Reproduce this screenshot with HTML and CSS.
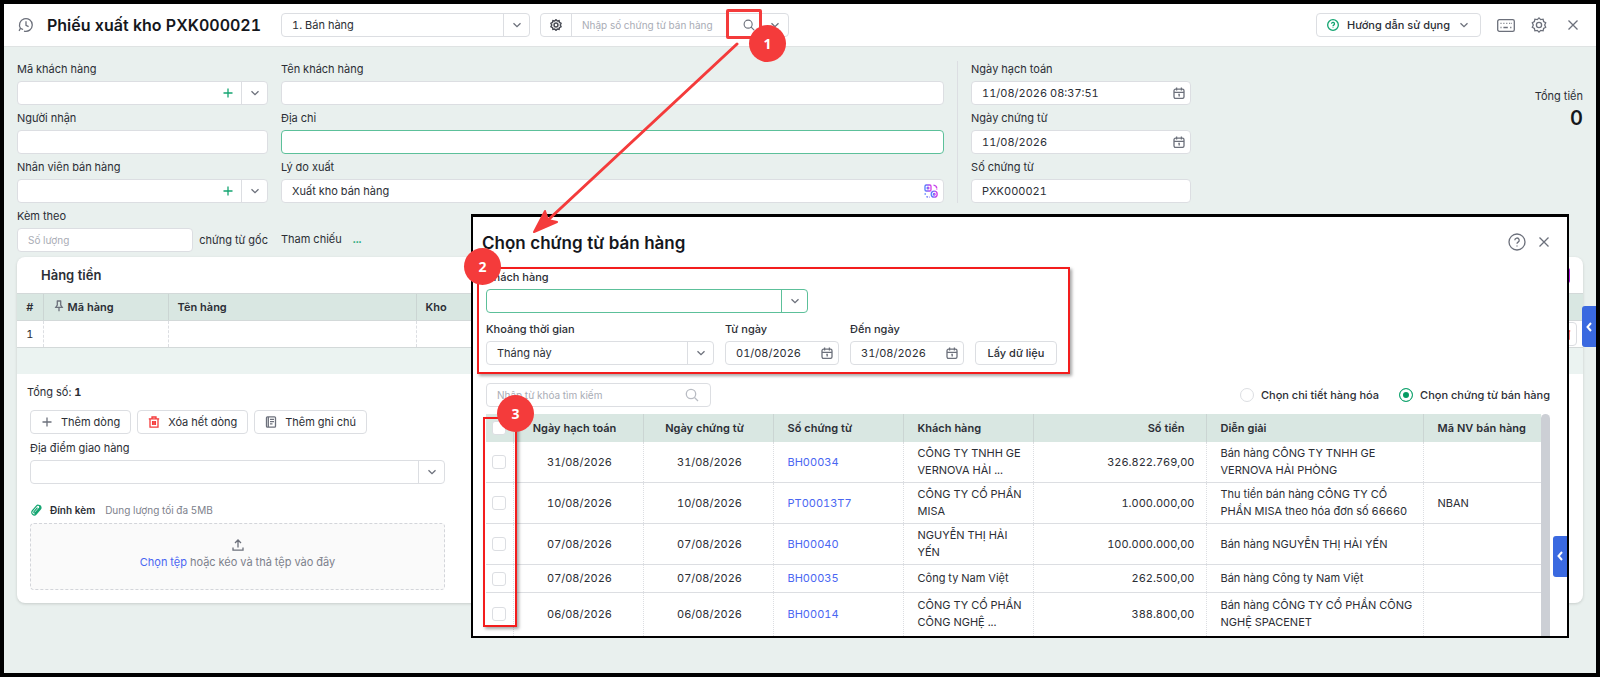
FILE: index.html
```html
<!DOCTYPE html>
<html lang="vi">
<head>
    <meta charset="UTF-8">
    <meta name="viewport" content="width=device-width, initial-scale=1.0">
    <title>Phiếu xuất kho PXK000021</title>
    <link rel="stylesheet" href="styles.css">
</head>
<body>
    <svg class="icon-defs" xmlns="http://www.w3.org/2000/svg">
        <symbol id="i-down" viewBox="0 0 12 12"><path d="M2.5 4.2 6 7.7l3.5-3.5"/></symbol>
        <symbol id="i-left" viewBox="0 0 12 12"><path d="M8 2 4.5 6 8 10"/></symbol>
        <symbol id="i-plus" viewBox="0 0 12 12"><path d="M6 1.5v9M1.5 6h9"/></symbol>
        <symbol id="i-close" viewBox="0 0 12 12"><path d="M1.5 1.5l9 9M10.5 1.5l-9 9"/></symbol>
        <symbol id="i-search" viewBox="0 0 14 14"><circle cx="6" cy="6" r="4.7"/><path d="M9.5 9.5 13 13"/></symbol>
        <symbol id="i-history" viewBox="0 0 16 16"><path d="M2.6 11.6A6.4 6.4 0 1 1 6 14.1M1.1 13.9l1.3-2.6 2.7 1.2M8 4.3V8.4l2.6 1.2"/></symbol>
        <symbol id="i-gear" viewBox="0 0 16 16"><circle cx="8" cy="8" r="2.6"/><path d="M8 .9l1.7 1.7 2.4-.4.5 2.3 2.1 1.3L13.7 8l1 2.2-2.1 1.3-.5 2.3-2.4-.4L8 15.1l-1.7-1.7-2.4.4-.5-2.3-2.1-1.3 1-2.2-1-2.2 2.1-1.3.5-2.3 2.4.4z"/></symbol>
        <symbol id="i-help" viewBox="0 0 18 18"><circle cx="9" cy="9" r="8"/><path d="M6.8 7.2a2.2 2.2 0 1 1 3.3 1.9c-.8.5-1.1.8-1.1 1.6M9 12.6v.9"/></symbol>
        <symbol id="i-keyboard" viewBox="0 0 18 13"><rect x=".7" y=".7" width="16.6" height="11.6" rx="1.6"/><path d="M3.5 4.3h1M6.4 4.3h1M9.3 4.3h1M12.2 4.3h1M14.3 4.3h.6M3.5 8.5h1M6.4 8.5h4.4M13.2 8.5h1.2"/></symbol>
        <symbol id="i-calendar" viewBox="0 0 12 12"><rect x="1" y="2.2" width="10" height="9.2" rx="1.6"/><path d="M1 5.3h10M3.6.6v3M8.4.6v3M5.3 7.5h.9v2"/></symbol>
        <symbol id="i-pin" viewBox="0 0 10 12"><path d="M2.8 1h4.4M3.3 1v4L1.8 7.3h6.4L6.7 5V1M5 7.3v4"/></symbol>
        <symbol id="i-trash" viewBox="0 0 12 12"><path d="M.8 2.8h10.4M4 2.8V1h4v1.8M2 2.8v8.4h8V2.8M4.6 5v4M6 5v4M7.4 5v4"/></symbol>
        <symbol id="i-note" viewBox="0 0 12 12"><rect x="1.5" y=".8" width="9" height="10.4" rx="1"/><path d="M3.3 1v10M5 3.4h4M5 5.6h4M5 7.8h2.5"/></symbol>
        <symbol id="i-clip" viewBox="0 0 12 13"><path d="M10.8 5.6 6.2 10.9a2.7 2.7 0 0 1-4.1-3.6L6.6 2a1.9 1.9 0 0 1 3 2.5L5.3 9.4a.9.9 0 0 1-1.4-1.2l3.7-4.3M10.8 5.6A2.6 2.6 0 0 0 9.6 1.5M4.7 11.8 11 4.4"/></symbol>
        <symbol id="i-upload" viewBox="0 0 12 12"><path d="M6 8.5V1.2M3 4l3-3 3 3M1 8.6v2.6h10V8.6"/></symbol>
        <symbol id="i-ai" viewBox="0 0 14 14"><rect x="1" y="1" width="6" height="6" rx="1.2"/><circle cx="4" cy="4" r=".9"/><circle cx="10.2" cy="10.2" r="3"/><circle cx="10.2" cy="10.2" r=".9"/><path d="M9.5 1.2c2 .2 3.2 1.3 3.3 3.3M1.2 9.3v1.4M2.4 12.6l1.6.5M5.2 13.1h.6M12.8 5.4v.5"/></symbol>
        <linearGradient id="aiColor" x1="0" x2="1"><stop offset="0" stop-color="#4d7cfe"/><stop offset="1" stop-color="#d63be8"/></linearGradient>
    </svg>

    <header class="topbar">
        <svg class="icon icon-history"><use href="#i-history"/></svg>
        <h1>Phiếu xuất kho PXK000021</h1>
        <div class="box combo type-select">
            <select aria-label="Loại phiếu"><option>1. Bán hàng</option></select>
            <span class="arrow"><svg class="icon"><use href="#i-down"/></svg></span>
        </div>
        <div class="box combo voucher-search">
            <button class="setting" aria-label="Thiết lập"><svg class="icon"><use href="#i-gear"/></svg></button>
            <input type="text" placeholder="Nhập số chứng từ bán hàng" aria-label="Số chứng từ bán hàng">
            <button class="find" aria-label="Tìm"><svg class="icon"><use href="#i-search"/></svg></button>
            <button class="arrow plain" aria-label="Mở danh sách"><svg class="icon"><use href="#i-down"/></svg></button>
            <span class="mark mark-find"></span>
            <span class="step step-1">1</span>
        </div>
        <div class="topbar-right">
            <button class="box btn guide"><svg class="icon green"><use href="#i-help"/></svg>Hướng dẫn sử dụng<svg class="icon"><use href="#i-down"/></svg></button>
            <button class="icon-btn" aria-label="Phím tắt"><svg class="icon icon-keyboard"><use href="#i-keyboard"/></svg></button>
            <button class="icon-btn" aria-label="Cài đặt"><svg class="icon icon-gear"><use href="#i-gear"/></svg></button>
            <button class="icon-btn" aria-label="Đóng"><svg class="icon icon-close"><use href="#i-close"/></svg></button>
        </div>
    </header>

    <main>
        <form class="voucher">
            <div class="column">
                <div class="field">
                    <label for="customerCode">Mã khách hàng</label>
                    <div class="box combo">
                        <input type="text" id="customerCode">
                        <button type="button" class="add" aria-label="Thêm khách hàng"><svg class="icon"><use href="#i-plus"/></svg></button>
                        <button type="button" class="arrow" aria-label="Mở danh sách"><svg class="icon"><use href="#i-down"/></svg></button>
                    </div>
                </div>
                <div class="field">
                    <label for="receiver">Người nhận</label>
                    <input type="text" class="box" id="receiver">
                </div>
                <div class="field">
                    <label for="seller">Nhân viên bán hàng</label>
                    <div class="box combo">
                        <input type="text" id="seller">
                        <button type="button" class="add" aria-label="Thêm nhân viên"><svg class="icon"><use href="#i-plus"/></svg></button>
                        <button type="button" class="arrow" aria-label="Mở danh sách"><svg class="icon"><use href="#i-down"/></svg></button>
                    </div>
                </div>
                <div class="field">
                    <label for="attached">Kèm theo</label>
                    <div class="attached">
                        <input type="text" class="box" id="attached" placeholder="Số lượng">
                        <span>chứng từ gốc</span>
                    </div>
                </div>
            </div>
            <div class="column">
                <div class="field">
                    <label for="customerName">Tên khách hàng</label>
                    <input type="text" class="box" id="customerName">
                </div>
                <div class="field">
                    <label for="address">Địa chỉ</label>
                    <input type="text" class="box focused" id="address">
                </div>
                <div class="field">
                    <label for="reason">Lý do xuất</label>
                    <div class="box combo">
                        <input type="text" id="reason" value="Xuất kho bán hàng">
                        <button type="button" class="ai" aria-label="Gợi ý"><svg class="icon"><use href="#i-ai"/></svg></button>
                    </div>
                </div>
                <div class="reference">Tham chiếu <a href="#">...</a></div>
            </div>
            <div class="column dates">
                <div class="field">
                    <label for="postDate">Ngày hạch toán</label>
                    <div class="box combo">
                        <input type="text" id="postDate" value="11/08/2026 08:37:51">
                        <button type="button" class="calendar" aria-label="Chọn ngày"><svg class="icon"><use href="#i-calendar"/></svg></button>
                    </div>
                </div>
                <div class="field">
                    <label for="voucherDate">Ngày chứng từ</label>
                    <div class="box combo">
                        <input type="text" id="voucherDate" value="11/08/2026">
                        <button type="button" class="calendar" aria-label="Chọn ngày"><svg class="icon"><use href="#i-calendar"/></svg></button>
                    </div>
                </div>
                <div class="field">
                    <label for="voucherNo">Số chứng từ</label>
                    <input type="text" class="box" id="voucherNo" value="PXK000021">
                </div>
            </div>
            <div class="total">
                <span>Tổng tiền</span>
                <strong>0</strong>
            </div>
        </form>

        <section class="card">
            <div class="card-head">
                <h2>Hàng tiền</h2>
                <span class="ai-tag"></span>
            </div>
            <table class="items">
                <thead>
                    <tr>
                        <th class="c-no">#</th>
                        <th class="c-code"><svg class="icon"><use href="#i-pin"/></svg>Mã hàng</th>
                        <th class="c-name">Tên hàng</th>
                        <th>Kho</th>
                    </tr>
                </thead>
                <tbody>
                    <tr>
                        <td class="c-no">1</td>
                        <td></td>
                        <td></td>
                        <td class="c-action"><button class="box row-delete" aria-label="Xóa dòng"><svg class="icon"><use href="#i-trash"/></svg></button></td>
                    </tr>
                </tbody>
            </table>
            <div class="items-sum"></div>
            <div class="card-body">
                <p class="count">Tổng số: <b>1</b></p>
                <div class="details">
                    <div class="actions">
                        <button class="box btn"><svg class="icon"><use href="#i-plus"/></svg>Thêm dòng</button>
                        <button class="box btn"><svg class="icon red"><use href="#i-trash"/></svg>Xóa hết dòng</button>
                        <button class="box btn"><svg class="icon"><use href="#i-note"/></svg>Thêm ghi chú</button>
                    </div>
                    <div class="field">
                        <label for="place">Địa điểm giao hàng</label>
                        <div class="box combo">
                            <input type="text" id="place">
                            <button class="arrow" aria-label="Mở danh sách"><svg class="icon"><use href="#i-down"/></svg></button>
                        </div>
                    </div>
                    <div class="attach-title">
                        <svg class="icon green"><use href="#i-clip"/></svg>
                        <b>Đính kèm</b>
                        <span>Dung lượng tối đa 5MB</span>
                    </div>
                    <div class="dropzone">
                        <svg class="icon"><use href="#i-upload"/></svg>
                        <p><a href="#">Chọn tệp</a> hoặc kéo và thả tệp vào đây</p>
                    </div>
                </div>
            </div>
        </section>
    </main>

    <button class="side-tab page-tab" aria-label="Mở rộng"><svg class="icon"><use href="#i-left"/></svg></button>

    <section class="dialog" role="dialog" aria-labelledby="dialogTitle">
        <div class="dialog-head">
            <h2 id="dialogTitle">Chọn chứng từ bán hàng</h2>
            <button class="icon-btn" aria-label="Trợ giúp"><svg class="icon icon-help"><use href="#i-help"/></svg></button>
            <button class="icon-btn" aria-label="Đóng"><svg class="icon icon-close"><use href="#i-close"/></svg></button>
        </div>

        <div class="filter">
            <div class="field customer">
                <label for="customer">Khách hàng</label>
                <div class="box combo focused">
                    <input type="text" id="customer">
                    <button class="arrow" aria-label="Mở danh sách"><svg class="icon"><use href="#i-down"/></svg></button>
                </div>
            </div>
            <div class="filter-row">
                <div class="field period">
                    <label for="period">Khoảng thời gian</label>
                    <div class="box combo">
                        <select id="period"><option>Tháng này</option></select>
                        <span class="arrow"><svg class="icon"><use href="#i-down"/></svg></span>
                    </div>
                </div>
                <div class="field date">
                    <label for="fromDate">Từ ngày</label>
                    <div class="box combo">
                        <input type="text" id="fromDate" value="01/08/2026">
                        <button class="calendar" aria-label="Chọn ngày"><svg class="icon"><use href="#i-calendar"/></svg></button>
                    </div>
                </div>
                <div class="field date">
                    <label for="toDate">Đến ngày</label>
                    <div class="box combo">
                        <input type="text" id="toDate" value="31/08/2026">
                        <button class="calendar" aria-label="Chọn ngày"><svg class="icon"><use href="#i-calendar"/></svg></button>
                    </div>
                </div>
                <button class="box btn load">Lấy dữ liệu</button>
            </div>
            <span class="mark mark-filter"></span>
            <span class="step step-2">2</span>
        </div>

        <div class="toolbar">
            <div class="box combo keyword">
                <input type="text" placeholder="Nhập từ khóa tìm kiếm" aria-label="Từ khóa">
                <button class="find" aria-label="Tìm"><svg class="icon"><use href="#i-search"/></svg></button>
            </div>
            <label class="radio"><input type="radio" name="mode">Chọn chi tiết hàng hóa</label>
            <label class="radio"><input type="radio" name="mode" checked>Chọn chứng từ bán hàng</label>
        </div>

        <div class="list">
            <table class="vouchers">
                <thead>
                    <tr>
                        <th class="v-check"><input type="checkbox" aria-label="Chọn tất cả"></th>
                        <th class="v-date">Ngày hạch toán</th>
                        <th class="v-date">Ngày chứng từ</th>
                        <th class="v-no">Số chứng từ</th>
                        <th class="v-customer">Khách hàng</th>
                        <th class="v-money">Số tiền</th>
                        <th>Diễn giải</th>
                        <th class="v-seller">Mã NV bán hàng</th>
                    </tr>
                </thead>
                <tbody>
                    <tr>
                        <td class="v-check"><input type="checkbox" aria-label="BH00034"></td>
                        <td class="v-date">31/08/2026</td>
                        <td class="v-date">31/08/2026</td>
                        <td><a href="#">BH00034</a></td>
                        <td>CÔNG TY TNHH GE VERNOVA HẢI ...</td>
                        <td class="v-money">326.822.769,00</td>
                        <td>Bán hàng CÔNG TY TNHH GE VERNOVA HẢI PHÒNG</td>
                        <td></td>
                    </tr>
                    <tr>
                        <td class="v-check"><input type="checkbox" aria-label="PT00013T7"></td>
                        <td class="v-date">10/08/2026</td>
                        <td class="v-date">10/08/2026</td>
                        <td><a href="#">PT00013T7</a></td>
                        <td>CÔNG TY CỔ PHẦN MISA</td>
                        <td class="v-money">1.000.000,00</td>
                        <td>Thu tiền bán hàng CÔNG TY CỔ PHẦN MISA theo hóa đơn số 66660</td>
                        <td>NBAN</td>
                    </tr>
                    <tr>
                        <td class="v-check"><input type="checkbox" aria-label="BH00040"></td>
                        <td class="v-date">07/08/2026</td>
                        <td class="v-date">07/08/2026</td>
                        <td><a href="#">BH00040</a></td>
                        <td>NGUYỄN THỊ HẢI YẾN</td>
                        <td class="v-money">100.000.000,00</td>
                        <td>Bán hàng NGUYỄN THỊ HẢI YẾN</td>
                        <td></td>
                    </tr>
                    <tr>
                        <td class="v-check"><input type="checkbox" aria-label="BH00035"></td>
                        <td class="v-date">07/08/2026</td>
                        <td class="v-date">07/08/2026</td>
                        <td><a href="#">BH00035</a></td>
                        <td>Công ty Nam Việt</td>
                        <td class="v-money">262.500,00</td>
                        <td>Bán hàng Công ty Nam Việt</td>
                        <td></td>
                    </tr>
                    <tr>
                        <td class="v-check"><input type="checkbox" aria-label="BH00014"></td>
                        <td class="v-date">06/08/2026</td>
                        <td class="v-date">06/08/2026</td>
                        <td><a href="#">BH00014</a></td>
                        <td>CÔNG TY CỔ PHẦN CÔNG NGHỆ ...</td>
                        <td class="v-money">388.800,00</td>
                        <td>Bán hàng CÔNG TY CỔ PHẦN CÔNG NGHỆ SPACENET</td>
                        <td></td>
                    </tr>
                </tbody>
            </table>
            <div class="scrollbar"></div>
            <span class="mark mark-check"></span>
            <span class="step step-3">3</span>
        </div>

        <button class="side-tab dialog-tab" aria-label="Mở rộng"><svg class="icon"><use href="#i-left"/></svg></button>
    </section>

    <svg class="pointer" viewBox="0 0 206 192">
        <path class="line" d="M204 2 14 179"/>
        <path class="tip" d="M1 190 12 169 15 178 24 180z"/>
    </svg>
</body>
</html>
```

FILE: styles.css
```css
:root {
    --green: #14a571;
    --green-border: #5cc09a;
    --link: #4a66f2;
    --red: #f43b3b;
    --text: #2b2e35;
    --muted: #7d818c;
    --border: #dcdee2;
    --page-bg: #e9f0ee;
    --head-bg: #d9e7e2;
}

* {
    margin: 0;
    padding: 0;
    box-sizing: border-box;
}

body {
    position: relative;
    min-height: 100vh;
    border: 4px solid #000;
    background-color: var(--page-bg);
    color: var(--text);
    font-family: Inter, "Liberation Sans", sans-serif;
    font-size: 11px;
    font-variant-numeric: tabular-nums;
    line-height: 16px;
}

a {
    color: var(--link);
    text-decoration: none;
}

button,
input,
select {
    font: inherit;
    font-variant-numeric: tabular-nums;
    color: inherit;
    border: none;
    background: none;
    outline: none;
}

input::placeholder {
    color: #a9acb5;
    font-size: 10px;
    opacity: 1;
}

.icon-defs {
    position: absolute;
    width: 0;
    height: 0;
}

.icon {
    display: block;
    flex: none;
    width: 12px;
    height: 12px;
    fill: none;
    stroke: #6c707b;
    stroke-width: 1.3;
}

.icon.green {
    stroke: var(--green);
}

.btn .icon.green {
    stroke-width: 2;
}

.icon.red {
    stroke: var(--red);
}

/* controls */
.box {
    width: 100%;
    height: 24px;
    border: 1px solid var(--border);
    border-radius: 4px;
    background-color: #fff;
}

input.box {
    padding: 0 10px;
}

.box.focused {
    border-color: var(--green-border);
}

.combo {
    display: flex;
    align-items: stretch;
}

.combo input,
.combo select {
    flex: 1;
    min-width: 0;
    padding: 0 10px;
    appearance: none;
}

.combo button,
.combo .arrow {
    display: flex;
    align-items: center;
    justify-content: center;
    width: 26px;
}

.combo .arrow {
    border-left: 1px solid var(--border);
}

.combo .arrow.plain {
    border-left: none;
}

.combo.focused .arrow {
    border-color: var(--green-border);
}

.combo .add .icon {
    stroke: var(--green);
}

.combo .calendar {
    width: 22px;
}

.combo .ai {
    width: 24px;
}

.combo .ai .icon {
    width: 14px;
    height: 14px;
    stroke: url(#aiColor);
}

.btn {
    display: flex;
    align-items: center;
    gap: 8px;
    width: auto;
    padding: 0 10px;
    font-weight: 500;
    white-space: nowrap;
}

.icon-btn {
    display: flex;
}

.field {
    display: flex;
    flex-direction: column;
    gap: 4px;
}

/* top bar */
.topbar {
    display: flex;
    align-items: center;
    height: 43px;
    padding: 0 17px 0 14px;
    background-color: #fff;
    border-bottom: 1px solid #dfe3e3;
}

.icon-history {
    width: 16px;
    height: 16px;
}

.topbar h1 {
    margin-left: 13px;
    font-size: 16px;
    font-weight: 600;
    color: #15171c;
    white-space: nowrap;
}

.type-select {
    width: 249px;
    margin-left: 20px;
}

.voucher-search {
    position: relative;
    width: 249px;
    margin-left: 10px;
}

.combo .setting {
    width: 31px;
    border-right: 1px solid var(--border);
}

.setting .icon {
    stroke: #4a4d56;
    stroke-width: 2;
}

.topbar-right {
    display: flex;
    align-items: center;
    gap: 16px;
    margin-left: auto;
}

.icon-keyboard {
    width: 18px;
    height: 13px;
}

.icon-gear {
    width: 16px;
    height: 16px;
}

.topbar .icon-close {
    margin-left: 4px;
}

/* voucher form */
main {
    padding: 14px 13px 20px;
}

.voucher {
    display: grid;
    grid-template-columns: 251px 7fr 234px 4fr;
    gap: 13px;
    align-items: start;
    padding-bottom: 5px;
}

.column {
    display: flex;
    flex-direction: column;
    gap: 5px;
}

.dates {
    padding-left: 13px;
    border-left: 1px solid var(--border);
}

.attached {
    display: flex;
    align-items: center;
    gap: 6px;
    white-space: nowrap;
}

.reference {
    margin-top: 19px;
    line-height: 24px;
}

.reference a {
    margin-left: 8px;
    color: var(--green);
    font-weight: 700;
}

.total {
    display: flex;
    flex-direction: column;
    gap: 4px;
    padding-top: 27px;
    text-align: right;
}

.total strong {
    font-size: 20px;
    line-height: 20px;
    font-weight: 600;
    color: #15171c;
}

/* items card */
.card {
    background-color: #fff;
    border-radius: 8px;
    box-shadow: 0 1px 3px rgba(0, 0, 0, 0.15);
}

.card-head {
    display: flex;
    align-items: center;
    justify-content: space-between;
    height: 36px;
    padding: 0 13px 0 24px;
}

.card-head h2 {
    font-size: 13px;
    font-weight: 600;
}

.ai-tag {
    width: 16px;
    height: 15px;
    border-radius: 2px;
    background-color: #b31be0;
}

.items {
    width: 100%;
    table-layout: fixed;
    border-collapse: collapse;
}

.items th,
.items td {
    height: 27px;
    padding: 0 9px;
    border-top: 1px solid #d3d9d9;
    border-bottom: 1px solid #d3d9d9;
    text-align: left;
}

.items th {
    background-color: var(--head-bg);
    font-weight: 600;
}

.items th + th {
    border-left: 1px solid #cbd5d3;
}

.items td + td {
    border-left: 1px dashed var(--border);
}

.items .c-no {
    width: 26px;
    padding: 0;
    text-align: center;
}

.items .c-code {
    width: 125px;
}

.items .c-code .icon {
    display: inline-block;
    width: 10px;
    margin: 0 4px 0 1px;
    vertical-align: -1px;
}

.items .c-name {
    width: 248px;
}

.items .c-action {
    padding-right: 6px;
}

.row-delete {
    display: flex;
    align-items: center;
    justify-content: center;
    width: 24px;
    margin-left: auto;
}

.row-delete .icon {
    stroke: var(--red);
}

.items-sum {
    height: 26px;
    background-color: #ebf3f1;
}

.card-body {
    padding: 10px 13px 13px;
}

.count {
    margin: 0 0 10px -3px;
}

.details {
    max-width: 415px;
}

.actions {
    display: flex;
    gap: 6px;
    margin-bottom: 6px;
}

.actions .btn {
    font-weight: 400;
}

.attach-title {
    display: flex;
    align-items: center;
    gap: 8px;
    margin: 18px 0 5px;
    font-size: 10px;
}

.attach-title b {
    font-weight: 600;
}

.attach-title span {
    margin-left: 2px;
    color: var(--muted);
}

.dropzone {
    display: flex;
    flex-direction: column;
    align-items: center;
    gap: 3px;
    height: 67px;
    padding-top: 15px;
    border: 1px dashed #d3d5da;
    border-radius: 4px;
    background-color: #fafafa;
    color: var(--muted);
}

/* blue pull-out tabs */
.side-tab {
    position: absolute;
    display: flex;
    align-items: center;
    justify-content: center;
    width: 14px;
    height: 41px;
    border-radius: 3px 0 0 3px;
    background-color: #3a69e0;
}

.side-tab .icon {
    stroke: #fff;
    stroke-width: 2;
}

.page-tab {
    top: 302px;
    right: 0;
}

.dialog-tab {
    right: 0;
    bottom: 59px;
}

/* voucher picker */
.dialog {
    position: absolute;
    top: 210px;
    left: 467px;
    right: 27px;
    padding: 0 17px 0 13px;
    border: 2px solid #000;
    border-top-width: 3px;
    background-color: #fff;
}

.dialog-head {
    display: flex;
    align-items: center;
    gap: 12px;
    height: 52px;
    padding-bottom: 2px;
}

.dialog-head h2 {
    margin: 2px auto 0 -4px;
    font-size: 17px;
    font-weight: 600;
    color: #15171c;
}

.icon-help {
    width: 18px;
    height: 18px;
}

.dialog label {
    font-weight: 500;
}

.filter {
    position: relative;
    display: flex;
    flex-direction: column;
    gap: 8px;
}

.filter-row {
    display: flex;
    align-items: flex-end;
    gap: 11px;
}

.filter .customer {
    width: 322px;
}

.filter .period {
    width: 228px;
}

.filter .date {
    width: 114px;
}

.filter .load {
    width: 82px;
    justify-content: center;
}

.toolbar {
    display: flex;
    align-items: center;
    margin-top: 18px;
}

.keyword {
    width: 225px;
    margin-right: auto;
}

.keyword .find .icon {
    width: 14px;
    height: 14px;
    stroke: #b9bcc3;
}

.combo.keyword .find {
    width: 36px;
}

.radio {
    display: flex;
    align-items: center;
    gap: 7px;
    margin-left: 20px;
}

.radio input {
    appearance: none;
    width: 14px;
    height: 14px;
    border: 1px solid var(--border);
    border-radius: 50%;
    background-color: #fff;
}

.radio input:checked {
    border-color: var(--green);
    background-color: #069b62;
    box-shadow: inset 0 0 0 3px #fff;
}

.list {
    position: relative;
    display: flex;
    margin-top: 7px;
}

.scrollbar {
    flex: none;
    width: 9px;
    border-radius: 5px 5px 0 0;
    background-color: #cccfd5;
}

.vouchers {
    flex: 1;
    table-layout: fixed;
    border-collapse: collapse;
}

.vouchers th {
    height: 28px;
    padding: 0 21px 0 14px;
    background-color: var(--head-bg);
    font-weight: 600;
    text-align: left;
    white-space: nowrap;
}

.vouchers td {
    height: 28px;
    padding: 3px 6px 3px 14px;
    border-bottom: 1px solid var(--border);
    line-height: 17px;
}

.vouchers tr:last-child td {
    height: 43px;
    border-bottom: none;
}

.vouchers th + th {
    border-left: 1px solid #cbd5d3;
}

.vouchers td + td {
    border-left: 1px dotted var(--border);
}

.vouchers .v-check {
    width: 27px;
    padding: 0;
    text-align: center;
}

.vouchers .v-date {
    width: 130px;
    text-align: center;
}

.vouchers .v-no,
.vouchers .v-customer {
    width: 130px;
}

.vouchers .v-money {
    width: 173px;
    text-align: right;
}

.vouchers td.v-date,
.vouchers td.v-money {
    padding-right: 11px;
}

.vouchers .v-seller {
    width: 118px;
    padding-right: 0;
}

.v-check input {
    display: block;
    appearance: none;
    width: 14px;
    height: 14px;
    margin: 0 auto;
    border: 1px solid var(--border);
    border-radius: 3px;
    background-color: #fff;
}

/* guide marks */
.mark {
    position: absolute;
    border: 2px solid #f31d1d;
    box-shadow: 2px 2px 3px rgba(0, 0, 0, 0.35);
    pointer-events: none;
}

.mark-find {
    top: -5px;
    right: 26px;
    width: 36px;
    height: 30px;
    border: 3px solid var(--red);
    border-radius: 2px;
    box-shadow: none;
}

.mark-filter {
    top: -2px;
    left: -9px;
    width: 593px;
    height: 107px;
}

.mark-check {
    top: 3px;
    left: -3px;
    bottom: 9px;
    width: 34px;
}

.step {
    position: absolute;
    width: 37px;
    height: 37px;
    border-radius: 50%;
    background-color: var(--red);
    color: #fff;
    font: 700 14px/37px "Open Sans", sans-serif;
    text-align: center;
}

.step-1 {
    top: 11px;
    right: 2px;
}

.step-2 {
    top: -21px;
    left: -22px;
}

.step-3 {
    top: -19px;
    left: 11px;
}

.pointer {
    position: absolute;
    top: 38px;
    left: 529px;
    width: 206px;
    height: 192px;
}

.pointer .line {
    stroke: var(--red);
    stroke-width: 3;
    stroke-linecap: round;
}

.pointer .tip {
    fill: var(--red);
    stroke: var(--red);
    stroke-width: 2;
    stroke-linejoin: round;
}
```
